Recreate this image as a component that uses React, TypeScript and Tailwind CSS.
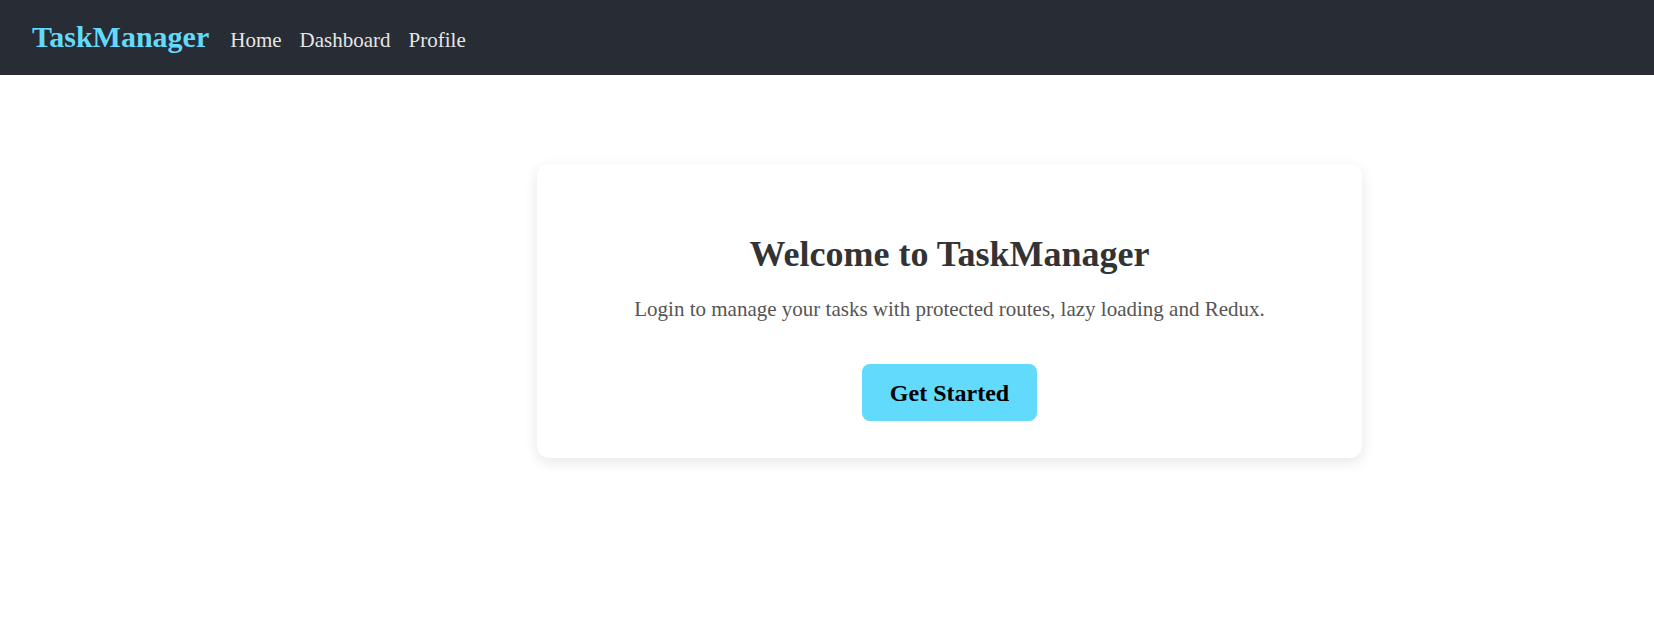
export default function App() {
  return (
    <div className="min-h-screen bg-white font-['Liberation_Serif',serif]">
      <nav className="h-[75px] bg-[#282c34] flex items-baseline pt-[20px] px-[32px]">
        <span className="text-[30px] font-bold text-[#61dafb] leading-[34px]">TaskManager</span>
        <div className="flex items-baseline gap-[18px] ml-[21px] text-[21px] text-[#e6e6e6]">
          <a href="#">Home</a>
          <a href="#">Dashboard</a>
          <a href="#">Profile</a>
        </div>
      </nav>

      <main className="pt-[89px]">
        <div className="ml-[537px] w-[825px] bg-white rounded-xl shadow-[0_4px_14px_rgba(0,0,0,0.1)] flex flex-col items-center text-center pt-[70px] pb-[37px]">
          <h1 className="text-[36px] font-bold text-[#333] leading-[40px]">Welcome to TaskManager</h1>
          <p className="mt-[23px] text-[21px] leading-[24px] text-[#555]">
            Login to manage your tasks with protected routes, lazy loading and Redux.
          </p>
          <button className="mt-[43px] h-[57px] px-[28px] rounded-lg bg-[#61dafb] text-[24px] font-bold text-black">
            Get Started
          </button>
        </div>
      </main>
    </div>
  );
}
